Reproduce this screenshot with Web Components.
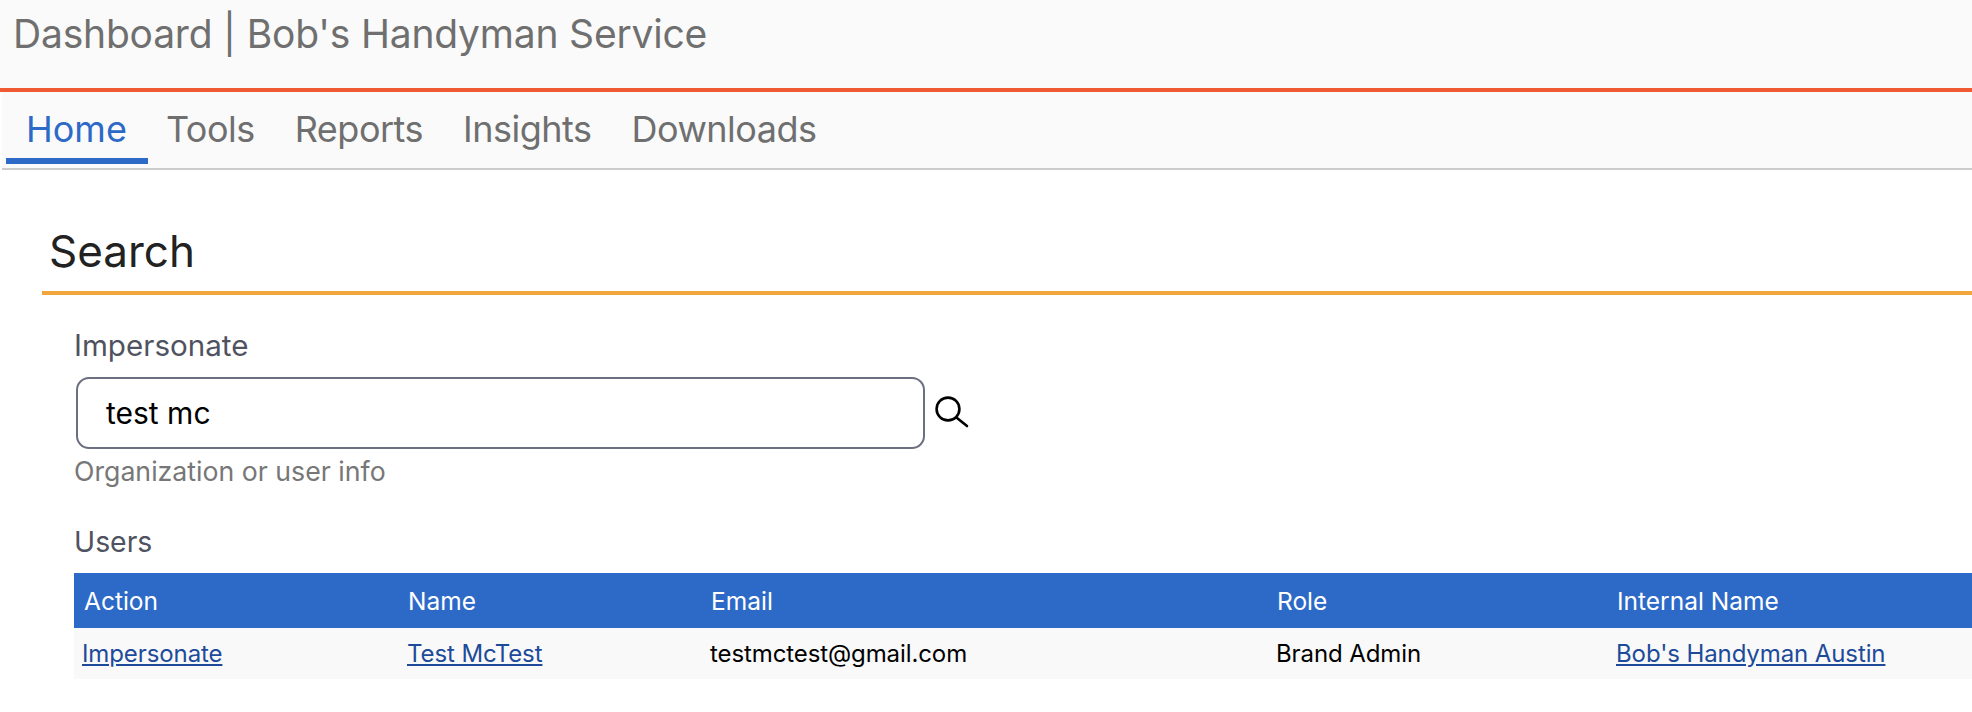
<!DOCTYPE html>
<html>
<head>
<meta charset="utf-8">
<title>Dashboard</title>
<style>
  html, body { margin: 0; padding: 0; background: #fff; overflow: hidden; }
  body { font-family: Inter, "Liberation Sans", sans-serif; width: 1972px; height: 712px; }
</style>
</head>
<body>
<app-header>Dashboard | Bob's Handyman Service</app-header>
<app-nav>
  <nav-tab active>Home</nav-tab>
  <nav-tab>Tools</nav-tab>
  <nav-tab>Reports</nav-tab>
  <nav-tab>Insights</nav-tab>
  <nav-tab>Downloads</nav-tab>
</app-nav>
<search-section title="Search">
  <search-field label="Impersonate" value="test mc" hint="Organization or user info"></search-field>
  <users-table label="Users"></users-table>
</search-section>

<script>
class AppHeader extends HTMLElement {
  constructor() {
    super();
    this.attachShadow({ mode: "open" }).innerHTML = `
      <style>
        :host {
          display: block;
          box-sizing: border-box;
          height: 92px;
          padding: 12px 0 0 13px;
          background: #fafafa;
          border-bottom: 4px solid #f05a33;
          color: #6f6f6f;
          font-size: 39px;
          letter-spacing: -0.2px;
          line-height: 44px;
        }
      </style>
      <slot></slot>`;
  }
}

class AppNav extends HTMLElement {
  constructor() {
    super();
    this.attachShadow({ mode: "open" }).innerHTML = `
      <style>
        :host {
          display: flex;
          box-sizing: border-box;
          height: 78px;
          margin-left: 2px;
          padding: 0 0 0 4px;
          background: #fafafa;
          border-bottom: 2px solid #cccccc;
        }
      </style>
      <slot></slot>`;
  }
}

class NavTab extends HTMLElement {
  constructor() {
    super();
    this.attachShadow({ mode: "open" }).innerHTML = `
      <style>
        :host {
          display: block;
          box-sizing: border-box;
          height: 72px;
          padding: 15px 20px 0;
          color: #6f6f6f;
          font-size: 36px;
          letter-spacing: -0.5px;
          line-height: 44px;
        }
        :host([active]) {
          color: #2d69c7;
          letter-spacing: 0;
          padding-right: 21px;
          margin-right: -2px;
          border-bottom: 6px solid #2d69c7;
        }
      </style>
      <slot></slot>`;
  }
}

class SearchSection extends HTMLElement {
  constructor() {
    super();
    this.attachShadow({ mode: "open" }).innerHTML = `
      <style>
        :host { display: block; padding: 50px 0 0 42px; }
        h2 {
          margin: 0;
          box-sizing: border-box;
          height: 75px;
          padding: 5px 0 0 7px;
          border-bottom: 4px solid #f0a63a;
          color: #222;
          font-size: 44px;
          font-weight: 400;
          line-height: 52px;
        }
        .body { padding: 33px 0 0 32px; }
      </style>
      <h2></h2>
      <div class="body"><slot></slot></div>`;
    this.shadowRoot.querySelector("h2").textContent = this.getAttribute("title");
  }
}

class SearchField extends HTMLElement {
  constructor() {
    super();
    this.attachShadow({ mode: "open" }).innerHTML = `
      <style>
        :host { display: block; color: #4f5260; }
        label { display: block; font-size: 29.6px; line-height: 34px; }
        .row { display: flex; align-items: center; margin-top: 15px; }
        .box {
          box-sizing: border-box;
          width: 849px;
          height: 72px;
          margin-left: 2px;
          padding: 0 0 0 28px;
          border: 2px solid #6b6f80;
          border-radius: 13px;
          background: #fff;
          color: #000;
          font: 400 30px/68px Inter, "Liberation Sans", sans-serif;
        }
        svg { display: block; margin-left: 10px; }
        .hint { margin-top: 5px; color: #777; font-size: 26.7px; line-height: 34px; }
      </style>
      <label></label>
      <div class="row">
        <div class="box"></div>
        <svg width="34" height="34" viewBox="0 0 34 34" fill="none" stroke="#000" stroke-width="2.6" stroke-linecap="round">
          <circle cx="13" cy="13" r="11.4"/>
          <path d="M21.4 21.4 L32 30"/>
        </svg>
      </div>
      <div class="hint"></div>`;
    this.shadowRoot.querySelector("label").textContent = this.getAttribute("label");
    this.shadowRoot.querySelector(".box").textContent = this.getAttribute("value");
    this.shadowRoot.querySelector(".hint").textContent = this.getAttribute("hint");
  }
}

class UsersTable extends HTMLElement {
  constructor() {
    super();
    this.attachShadow({ mode: "open" }).innerHTML = `
      <style>
        :host { display: block; margin-top: 37px; }
        .label { color: #4f5260; font-size: 28.4px; line-height: 34px; }
        .grid {
          display: grid;
          grid-template-columns: 324px 303px 566px 340px 1fr;
          margin-top: 14px;
        }
        .th {
          height: 55px;
          padding-left: 10px;
          background: #2d69c7;
          color: #fff;
          font-size: 24.5px;
          line-height: 56px;
        }
        .td {
          height: 51px;
          padding-left: 9px;
          background: #f9f9f9;
          color: #000;
          font-size: 24px;
          letter-spacing: -0.1px;
          line-height: 51px;
        }
        .td.first { padding-left: 8px; }
        a { color: #1d4b9a; text-decoration: underline; }
      </style>
      <div class="label"></div>
      <div class="grid">
        <div class="th">Action</div>
        <div class="th">Name</div>
        <div class="th">Email</div>
        <div class="th">Role</div>
        <div class="th">Internal Name</div>
        <div class="td first"><a>Impersonate</a></div>
        <div class="td"><a>Test McTest</a></div>
        <div class="td">testmctest@gmail.com</div>
        <div class="td">Brand Admin</div>
        <div class="td"><a>Bob's Handyman Austin</a></div>
      </div>`;
    this.shadowRoot.querySelector(".label").textContent = this.getAttribute("label");
  }
}

customElements.define("app-header", AppHeader);
customElements.define("app-nav", AppNav);
customElements.define("nav-tab", NavTab);
customElements.define("search-section", SearchSection);
customElements.define("search-field", SearchField);
customElements.define("users-table", UsersTable);
</script>
</body>
</html>
